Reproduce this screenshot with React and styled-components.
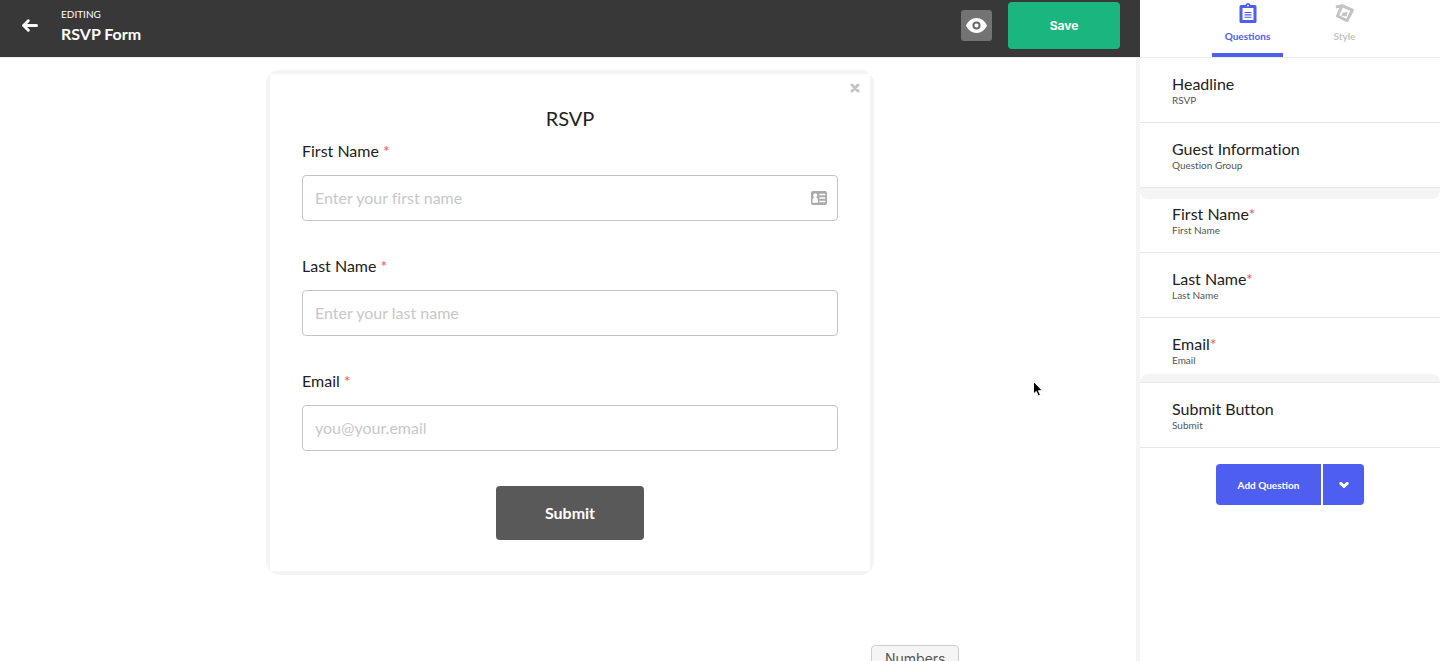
import React, { useState } from 'react'
import styled, { createGlobalStyle } from 'styled-components'

const GlobalStyle = createGlobalStyle`
    * {
        box-sizing: border-box;
    }

    body {
        margin: 0;
        overflow: hidden;
        background: #fff;
        color: #222;
        font-family: Lato, sans-serif;
        font-variant-ligatures: none;
    }

    button,
    input {
        font-family: inherit;
    }

    button {
        border: none;
        padding: 0;
        cursor: pointer;
    }
`

const Page = styled.div`
    display: grid;
    grid-template-columns: 1fr 300px;
    height: 100vh;
    position: relative;
    overflow: hidden;
`

const Editor = styled.div`
    display: flex;
    flex-direction: column;
    min-width: 0;
`

const TopBar = styled.header`
    display: flex;
    align-items: flex-start;
    height: 57px;
    padding: 2px 20px 0;
    background: #383838;
    color: #fff;
`

const BackLink = styled.a`
    display: flex;
    width: 20px;
    margin-top: 14px;
    margin-right: 21px;
    color: #fff;
`

const FormTitle = styled.div`
    flex: 1;
    padding-top: 6px;

    p {
        margin: 0;
        font-size: 10px;
        line-height: 12px;
    }

    h1 {
        margin: 4px 0 0;
        font-size: 16px;
        line-height: 20px;
        font-weight: 700;
    }
`

const PreviewButton = styled.button`
    display: flex;
    align-items: center;
    justify-content: center;
    width: 31px;
    height: 31px;
    margin: 8px 16px 0 0;
    border-radius: 3px;
    background: #737373;
    color: #fff;
`

const SaveButton = styled.button`
    width: 112px;
    height: 47px;
    border-radius: 4px;
    background: #1bb580;
    color: #fff;
    font-family: Inter, sans-serif;
    font-size: 12px;
    font-weight: 700;
`

const Canvas = styled.main`
    flex: 1;
    padding: 12px 16px 12px 20px;
    border-top: 1px solid #ececec;
    border-right: 4px solid #f4f4f4;
`

const CardFrame = styled.div`
    max-width: 608px;
    margin: 0 auto;
    padding: 4px;
    border-radius: 14px;
    background: #f4f4f4;
`

const Card = styled.form`
    display: flex;
    flex-direction: column;
    padding: 9px 32px 31px;
    background: #fff;

    h2 {
        margin: 12px 0 10px;
        text-align: center;
        font-size: 20px;
        line-height: 26px;
        font-weight: 400;
    }
`

const CloseButton = styled.button`
    display: flex;
    align-self: flex-end;
    margin-right: -22px;
    background: none;
    color: #c4c4c4;
`

const Field = styled.div`
    margin-bottom: 35px;

    label {
        display: block;
        margin-bottom: 14px;
        font-size: 16px;
        line-height: 20px;
    }
`

const Star = styled.span`
    color: #f2545b;
`

const InputBox = styled.div`
    display: flex;
    align-items: center;
    height: 46px;
    padding: 0 10px 0 12px;
    border: 1px solid #c4c4c4;
    border-radius: 4px;

    input {
        flex: 1;
        min-width: 0;
        padding: 0;
        border: none;
        outline: none;
        background: none;
        color: #222;
        font-size: 16px;
        line-height: 24px;
        font-variant-ligatures: none;
    }

    input::placeholder {
        color: #c8c8c8;
        opacity: 1;
    }
`

const SubmitButton = styled.button`
    align-self: center;
    width: 148px;
    height: 54px;
    padding-bottom: 2px;
    border-radius: 4px;
    background: #595959;
    color: #fff;
    font-size: 16px;
    font-weight: 700;
`

const Sidebar = styled.aside`
    background: #fff;
`

const Tabs = styled.nav`
    display: flex;
    justify-content: center;
    gap: 26px;
    height: 58px;
    padding-left: 12px;
    border-bottom: 1px solid #ececec;
`

const Tab = styled.button`
    display: flex;
    flex-direction: column;
    align-items: center;
    gap: 5px;
    width: 71px;
    height: 57px;
    padding-top: 2px;
    border-bottom: 4px solid ${props => props.$active ? '#4d5ef0' : 'transparent'};
    background: none;
    color: ${props => props.$active ? '#4d5ef0' : '#c4c4c4'};
    font-size: 10px;
    line-height: 14px;
    font-weight: 700;
    font-variant-ligatures: normal;
`

const QuestionList = styled.ul`
    margin: 0;
    padding: 0;
    list-style: none;
`

const QuestionGroup = styled(QuestionList)`
    position: relative;

    &::before,
    &::after {
        content: '';
        position: absolute;
        left: 0;
        right: 0;
        background: #f4f4f4;
    }

    &::before {
        top: 0;
        height: 11px;
        border-radius: 0 0 8px 8px;
    }

    &::after {
        bottom: 1px;
        height: 8px;
        border-radius: 8px 8px 0 0;
    }
`

const Question = styled.li`
    height: 65px;
    padding: 16px 32px 0;
    border-bottom: 1px solid #e8e8e8;

    h3 {
        margin: 0;
        font-size: 16px;
        line-height: 20px;
        font-weight: 400;
    }

    p {
        margin: 0;
        color: #555;
        font-size: 10px;
        line-height: 12px;
    }
`

const AddButtons = styled.div`
    display: flex;
    justify-content: center;
    gap: 2px;
    padding-top: 16px;
`

const AddButton = styled.button`
    display: flex;
    align-items: center;
    justify-content: center;
    width: ${props => props.$arrow ? '41px' : '105px'};
    height: 41px;
    border-radius: ${props => props.$arrow ? '0 4px 4px 0' : '4px 0 0 4px'};
    background: #4d5ef0;
    color: #fff;
    font-size: 10px;
    font-weight: 700;
    font-variant-ligatures: normal;
`

const DragLabel = styled.div`
    position: absolute;
    left: 871px;
    bottom: -14px;
    height: 30px;
    padding: 0 13px;
    border: 1px solid #cfcfcf;
    border-radius: 4px;
    background: #f5f5f5;
    color: #555;
    font-family: Inter, sans-serif;
    font-size: 14px;
    line-height: 26px;
`

const Pointer = styled.svg`
    position: absolute;
    left: 1032px;
    top: 380px;
`

const ArrowIcon = () => (
    <svg width="20" height="20" viewBox="0 0 20 20" fill="none" stroke="currentColor" strokeWidth="3" strokeLinecap="round" strokeLinejoin="round">
        <path d="M4 9.5H16.5" />
        <path d="M8.3 4.8L3.6 9.5L8.3 14.2" />
    </svg>
)

const EyeIcon = () => (
    <svg width="21" height="15" viewBox="0 0 21 15">
        <path d="M0 7.5C2 3 5.9 0 10.5 0S19 3 21 7.5C19 12 15.1 15 10.5 15S2 12 0 7.5Z" fill="currentColor" />
        <circle cx="10.5" cy="7.5" r="3.1" fill="none" stroke="#6a6a6a" strokeWidth="2" />
    </svg>
)

const CloseIcon = () => (
    <svg width="10" height="10" viewBox="0 0 10 10" fill="none" stroke="currentColor" strokeWidth="3" strokeLinecap="round">
        <path d="M2 2L8 8M8 2L2 8" />
    </svg>
)

const ContactIcon = () => (
    <svg width="16" height="14" viewBox="0 0 16 14">
        <rect width="16" height="14" rx="2" fill="#aaa" />
        <circle cx="4.2" cy="4.2" r="2" fill="#fff" />
        <path d="M1.5 11.8V9.3C1.5 7.3 2.6 6 4.2 6S6.9 7.3 6.9 9.3V11.8Z" fill="#fff" />
        <path d="M8.3 3.5H14.3M8.3 7H14.3M8.3 10.5H14.3" stroke="#fff" strokeWidth="1.6" />
    </svg>
)

const QuestionsIcon = () => (
    <svg width="20" height="22" viewBox="0 0 20 22" fill="none" stroke="currentColor">
        <path d="M3 4.5H17V19.5H3Z" strokeWidth="3" strokeLinejoin="round" />
        <path d="M5 6V3H7.5C7.9 1.7 8.8 1 10 1S12.1 1.7 12.5 3H15V6Z" fill="currentColor" stroke="none" />
        <circle cx="10" cy="3.6" r="0.9" fill="#fff" stroke="none" />
        <path d="M6.5 10.5H13.5M6.5 12.9H13.5M6.5 15.3H13.5" strokeWidth="1.1" />
    </svg>
)

const StyleIcon = () => (
    <svg width="20" height="22" viewBox="0 0 20 22" fill="none" stroke="currentColor" strokeWidth="3">
        <path d="M0.8 5L6 4" />
        <path d="M7 3.6L17.4 8.2L12 18.6L2.4 14Z" strokeLinejoin="round" />
        <path d="M6 13.6L8 10.6L12.6 10L11.4 14.6Z" fill="currentColor" stroke="none" />
    </svg>
)

const ChevronIcon = () => (
    <svg width="10" height="8" viewBox="0 0 10 8" fill="none" stroke="currentColor" strokeWidth="3" strokeLinecap="round" strokeLinejoin="round">
        <path d="M1.8 2.4L5 5.5L8.2 2.4" />
    </svg>
)

const fields = [
    { id: 'first', label: 'First Name', placeholder: 'Enter your first name', contact: true },
    { id: 'last', label: 'Last Name', placeholder: 'Enter your last name' },
    { id: 'email', label: 'Email', placeholder: 'you@your.email' }
]

function QuestionItem({ title, detail, required }) {
    return (
        <Question>
            <h3>{title}{required ? <Star>*</Star> : null}</h3>
            <p>{detail}</p>
        </Question>
    )
}

export default function App() {
    const [tab, setTab] = useState('questions')

    return (
        <Page>
            <GlobalStyle />
            <Editor>
                <TopBar>
                    <BackLink href="#" aria-label="Back"><ArrowIcon /></BackLink>
                    <FormTitle>
                        <p>EDITING</p>
                        <h1>RSVP Form</h1>
                    </FormTitle>
                    <PreviewButton aria-label="Preview"><EyeIcon /></PreviewButton>
                    <SaveButton>Save</SaveButton>
                </TopBar>
                <Canvas>
                    <CardFrame>
                        <Card onSubmit={e => e.preventDefault()}>
                            <CloseButton type="button" aria-label="Close"><CloseIcon /></CloseButton>
                            <h2>RSVP</h2>
                            {fields.map(field => (
                                <Field key={field.id}>
                                    <label htmlFor={field.id}>{field.label} <Star>*</Star></label>
                                    <InputBox>
                                        <input id={field.id} placeholder={field.placeholder} />
                                        {field.contact ? <ContactIcon /> : null}
                                    </InputBox>
                                </Field>
                            ))}
                            <SubmitButton>Submit</SubmitButton>
                        </Card>
                    </CardFrame>
                </Canvas>
            </Editor>
            <Sidebar>
                <Tabs>
                    <Tab $active={tab === 'questions'} onClick={() => setTab('questions')}>
                        <QuestionsIcon />
                        Questions
                    </Tab>
                    <Tab $active={tab === 'style'} onClick={() => setTab('style')}>
                        <StyleIcon />
                        Style
                    </Tab>
                </Tabs>
                <QuestionList>
                    <QuestionItem title="Headline" detail="RSVP" />
                    <QuestionItem title="Guest Information" detail="Question Group" />
                    <li>
                        <QuestionGroup>
                            <QuestionItem title="First Name" detail="First Name" required />
                            <QuestionItem title="Last Name" detail="Last Name" required />
                            <QuestionItem title="Email" detail="Email" required />
                        </QuestionGroup>
                    </li>
                    <QuestionItem title="Submit Button" detail="Submit" />
                </QuestionList>
                <AddButtons>
                    <AddButton>Add Question</AddButton>
                    <AddButton $arrow aria-label="More question types"><ChevronIcon /></AddButton>
                </AddButtons>
            </Sidebar>
            <DragLabel>Numbers</DragLabel>
            <Pointer width="12" height="18" viewBox="0 0 12 18">
                <path d="M1.5 1.5V14L4.3 11.4L6.2 16L8.4 15L6.5 10.7H10.4Z" fill="#000" stroke="#fff" strokeWidth="1" />
            </Pointer>
        </Page>
    )
}
